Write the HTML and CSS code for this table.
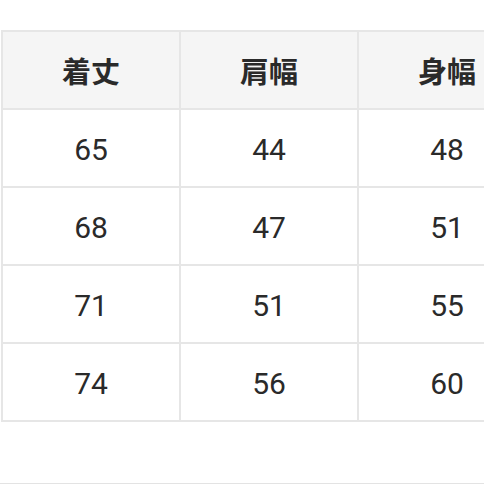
FILE: index.html
```html
<!DOCTYPE html>
<html lang="ja">
<head>
<meta charset="utf-8">
<link rel="stylesheet" href="styles.css">
</head>
<body>
<div class="page">
  <div class="size-table">
    <div class="cell head">着丈</div>
    <div class="cell head">肩幅</div>
    <div class="cell head">身幅</div>
    <div class="cell">65</div>
    <div class="cell">44</div>
    <div class="cell">48</div>
    <div class="cell">68</div>
    <div class="cell">47</div>
    <div class="cell">51</div>
    <div class="cell">71</div>
    <div class="cell">51</div>
    <div class="cell">55</div>
    <div class="cell">74</div>
    <div class="cell">56</div>
    <div class="cell">60</div>
  </div>
  <div class="rule"></div>
</div>
</body>
</html>
```

FILE: styles.css
```css
html, body {
  margin: 0;
  padding: 0;
  width: 484px;
  height: 484px;
  overflow: hidden;
  background: #ffffff;
}
.page {
  padding-top: 30px;
  width: 484px;
  overflow: hidden;
}
.size-table {
  display: grid;
  grid-template-columns: repeat(3, 178px);
  grid-auto-rows: 78px;
  margin-left: 1px;
  width: 536px;
  border-top: 2px solid #e6e6e6;
  border-left: 2px solid #e6e6e6;
  font-family: Roboto, "Noto Sans CJK JP", sans-serif;
  color: #2a2a2a;
}
.cell {
  display: flex;
  align-items: center;
  justify-content: center;
  box-sizing: border-box;
  padding-top: 3px;
  border-right: 2px solid #e6e6e6;
  border-bottom: 2px solid #e6e6e6;
  font-size: 30px;
  font-weight: 400;
  background: #ffffff;
}
.cell.head {
  padding-top: 0;
  background: #f5f5f5;
  font-family: "Noto Sans CJK JP", sans-serif;
  font-size: 29px;
  font-weight: 700;
}
.rule {
  margin-top: 61px;
  height: 1px;
  background: #e3e3e3;
}
```
